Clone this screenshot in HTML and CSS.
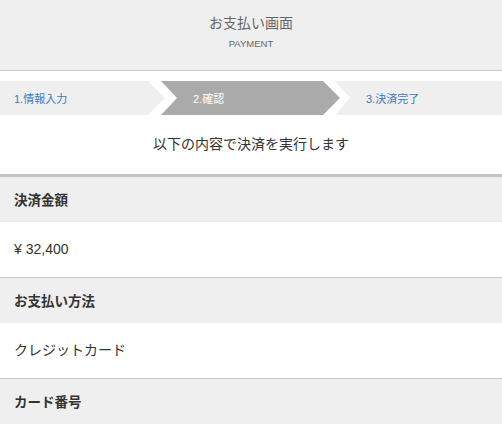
FILE: index.html
```html
<!DOCTYPE html>
<html>
<head>
  <meta charset="utf-8">
  <title>お支払い画面</title>
  <link rel="stylesheet" href="styles.css">
</head>
<body>
  <div class="header">
    <h1>お支払い画面</h1>
    <p class="sub">PAYMENT</p>
  </div>

  <div class="steps">
    <div class="step step-first">1.情報入力</div>
    <div class="step step-current">2.確認</div>
    <div class="step step-last">3.決済完了</div>
  </div>

  <p class="message">以下の内容で決済を実行します</p>

  <div class="details">
    <div class="label">決済金額</div>
    <div class="value">¥ 32,400</div>
    <div class="label">お支払い方法</div>
    <div class="value">クレジットカード</div>
    <div class="label">カード番号</div>
  </div>
</body>
</html>
```

FILE: styles.css
```css
body {
  margin: 0;
  font-family: "Liberation Sans", "Noto Sans CJK JP", sans-serif;
  background-color: #ffffff;
  color: #333333;
}

.header {
  height: 69px;
  background-color: #efefef;
  border-bottom: 1px solid #c8c8c8;
  text-align: center;
  box-sizing: content-box;
  padding-top: 1px;
}

.header h1 {
  margin: 12px 0 0;
  font-size: 14px;
  font-weight: normal;
  line-height: 20px;
  color: #666666;
}

.header .sub {
  margin: 5px 0 0;
  font-size: 9.5px;
  line-height: 12px;
  color: #666666;
}

.steps {
  display: flex;
  margin-top: 10px;
  height: 34px;
}

.step {
  display: flex;
  align-items: center;
  font-size: 11px;
  background-color: #efefef;
  color: #3b7bbf;
}

.step-first {
  width: 165px;
  padding-left: 14px;
  box-sizing: border-box;
  clip-path: polygon(0 0, calc(100% - 17px) 0, 100% 50%, calc(100% - 17px) 100%, 0 100%);
}

.step-current {
  width: 179px;
  margin-left: -4px;
  padding-left: 32px;
  box-sizing: border-box;
  background-color: #aaaaaa;
  color: #ffffff;
  clip-path: polygon(0 0, calc(100% - 17px) 0, 100% 50%, calc(100% - 17px) 100%, 0 100%, 16px 50%);
}

.step-last {
  flex: 1;
  margin-left: -5px;
  padding-left: 31px;
  clip-path: polygon(0 0, 100% 0, 100% 100%, 0 100%, 15px 50%);
}

.message {
  margin: 0;
  height: 59px;
  line-height: 59px;
  text-align: center;
  font-size: 14px;
  border-bottom: 3px solid #c4c4c4;
}

.label {
  height: 45px;
  padding-top: 2px;
  box-sizing: border-box;
  line-height: 43px;
  padding-left: 14px;
  background-color: #efefef;
  font-size: 13.5px;
  font-weight: bold;
}

.value {
  height: 55px;
  line-height: 55px;
  padding-left: 14px;
  font-size: 14px;
  border-bottom: 1px solid #c8c8c8;
}
```
